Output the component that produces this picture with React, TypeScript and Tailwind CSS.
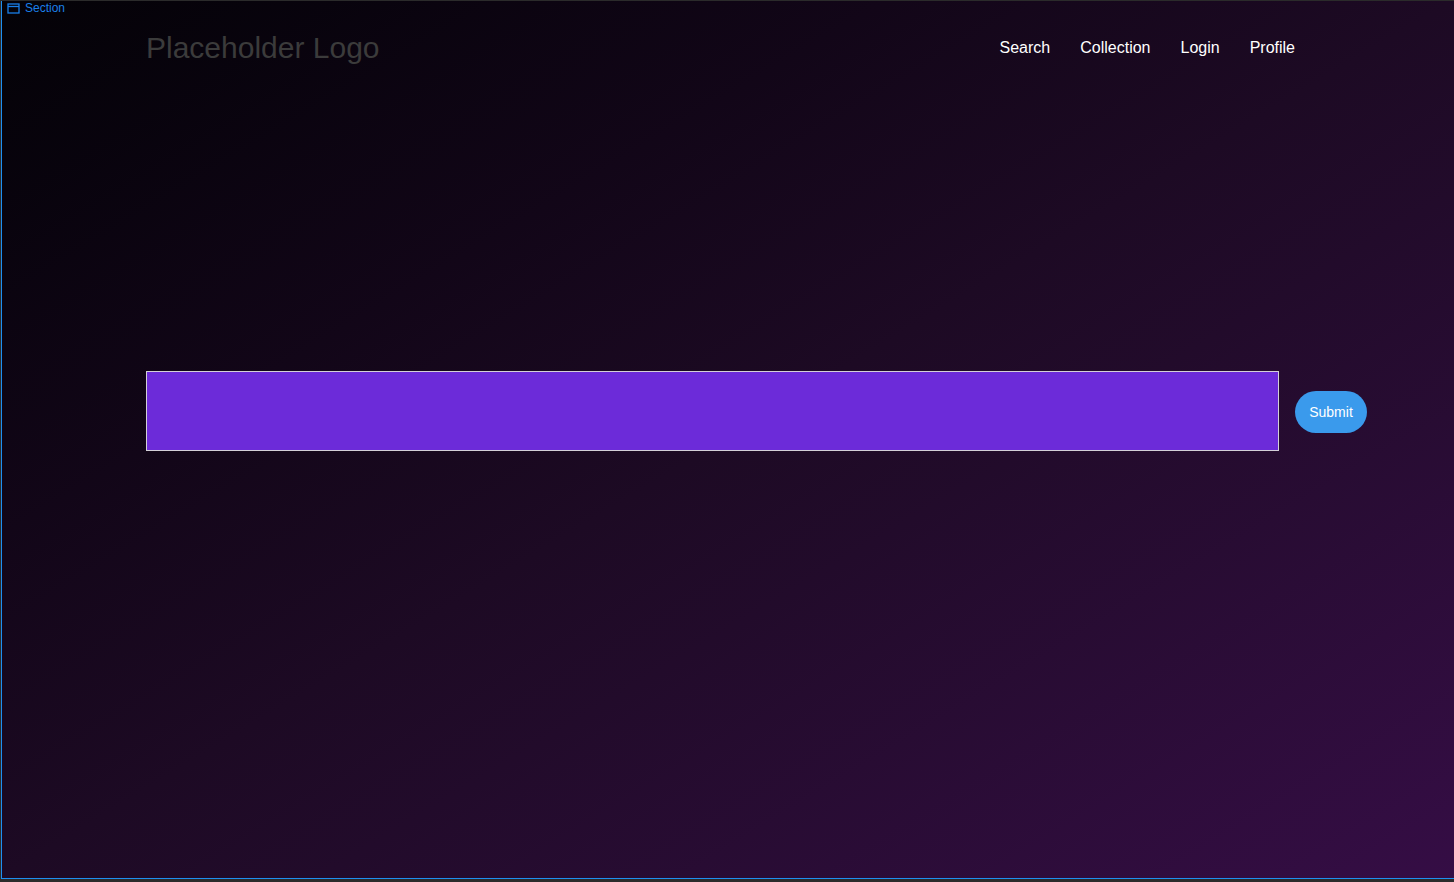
export default function App() {
  const links = ["Search", "Collection", "Login", "Profile"];

  return (
    <div className="h-[882px] w-full bg-[#2b2b2b] pt-px pl-px pb-[3px] font-['Liberation_Sans',Arial,sans-serif]">
      <section className="relative h-[878px] w-full border-l border-b border-[#1e8ff0] bg-gradient-to-br from-[#040207] via-[#1d0a24] to-[#350d45]">
        {/* editor label */}
        <div className="absolute left-[5px] top-0 flex items-center gap-[5px] text-[12px] leading-[14px] text-[#1a7fe8]">
          <svg width="13" height="11" viewBox="0 0 13 11" fill="none" stroke="currentColor" strokeWidth="1.3">
            <rect x="1" y="1" width="11" height="9" />
            <line x1="1" y1="3.5" x2="12" y2="3.5" />
          </svg>
          <span>Section</span>
        </div>

        <header className="flex h-[94px] items-center justify-between pl-[144px] pr-[159px]">
          <div className="text-[30px] leading-none text-[#3b3b3b]">Placeholder Logo</div>
          <nav className="flex items-center gap-[30px] text-[16px] text-white">
            {links.map((l) => (
              <a key={l} href="#" className="leading-none">
                {l}
              </a>
            ))}
          </nav>
        </header>

        <form className="mt-[276px] flex items-center gap-4 pl-[144px] pr-[87px]" onSubmit={(e) => e.preventDefault()}>
          <input
            type="text"
            className="h-[80px] flex-1 border border-[#d4d0d8] bg-[#6c2bd9] px-3 text-white outline-none"
          />
          <button
            type="submit"
            className="mt-[2px] h-[42px] w-[72px] rounded-full bg-[#3a9aec] text-[14px] text-white"
          >
            Submit
          </button>
        </form>
      </section>
    </div>
  );
}
